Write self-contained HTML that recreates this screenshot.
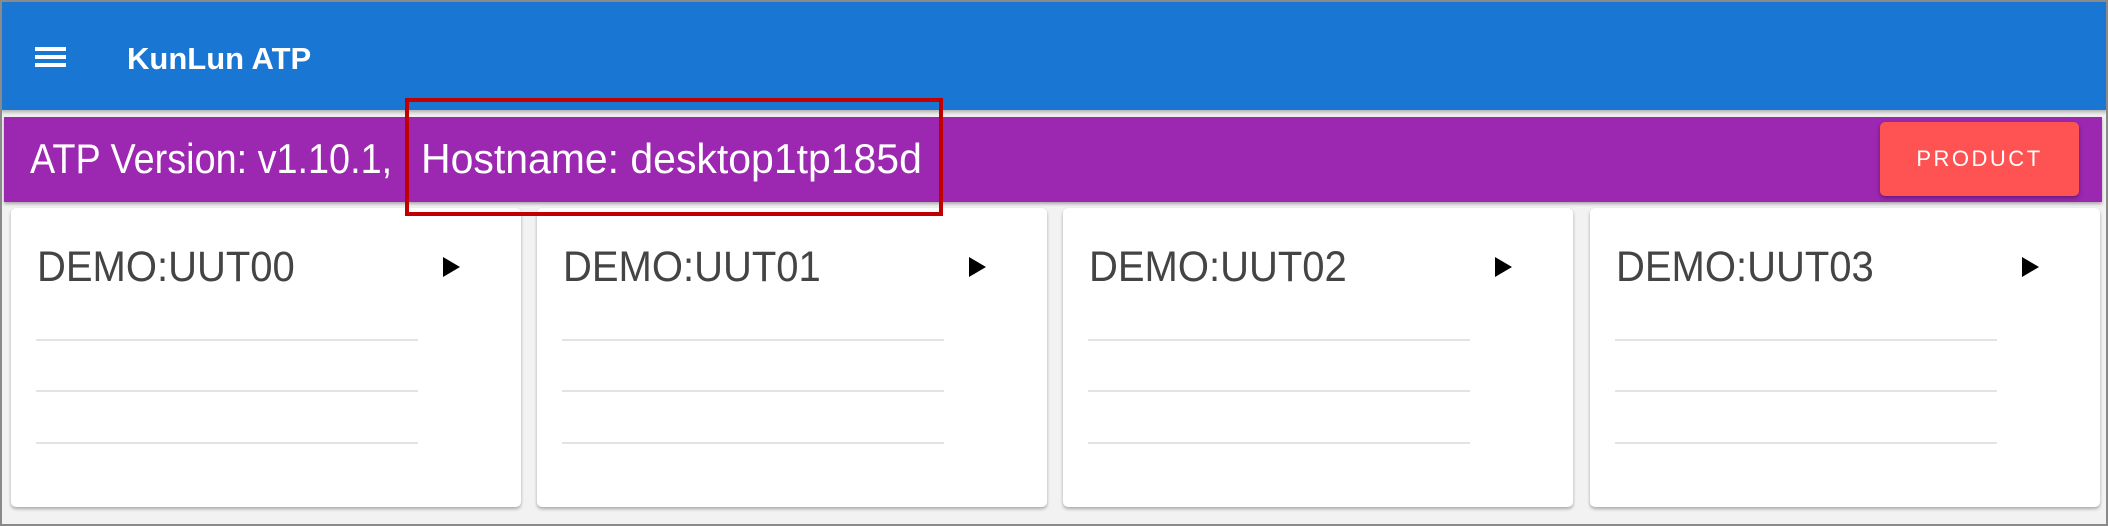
<!DOCTYPE html>
<html><head><style>
body{margin:0;width:2108px;height:526px;overflow:hidden;background:#f2f2f2;font-family:"Liberation Sans",sans-serif;position:relative}
.frame{position:absolute;left:0;top:0;width:2104px;height:522px;border:2px solid #8a8a8a;z-index:10;pointer-events:none}
.hdr{position:absolute;left:0;top:0;width:2108px;height:110px;background:#1976d2;box-shadow:0 2px 4px rgba(0,0,0,.3)}
.ham{position:absolute;left:35px;width:31px;height:4px;background:#fff}
.title{position:absolute;left:127px;top:41px;color:#fff;font-size:31px;font-weight:bold}
.bar{position:absolute;left:4px;top:117px;width:2098px;height:85px;background:#9c27b0;box-shadow:0 2px 3px rgba(0,0,0,.3)}
.ver{position:absolute;top:135px;color:#fff;font-size:42px;white-space:nowrap;transform-origin:0 0}
.btn{position:absolute;left:1880px;top:122px;width:199px;height:74px;background:#ff5252;border-radius:5px;color:#fff;font-size:22px;letter-spacing:2.5px;text-align:center;line-height:74px;box-shadow:0 2px 4px rgba(0,0,0,.35)}
.red{position:absolute;left:405px;top:98px;width:530px;height:110px;border:4px solid #c00000;z-index:5}
.card{position:absolute;top:208px;width:510px;height:299px;background:#fff;border-radius:5px;box-shadow:0 2px 3px rgba(0,0,0,.3)}
.ct{position:absolute;left:26px;top:35px;font-size:43px;color:#444;white-space:nowrap;transform-origin:0 0;transform:scaleX(0.93)}
.tri{position:absolute;left:432px;top:49px;width:0;height:0;border-top:10px solid transparent;border-bottom:10px solid transparent;border-left:17px solid #000}
.ln{position:absolute;left:25px;width:382px;height:2px;background:#e3e3e3}
</style></head><body>
<div class="hdr">
<div class="ham" style="top:47px"></div><div class="ham" style="top:55px"></div><div class="ham" style="top:63px"></div>
<div class="title">KunLun ATP</div>
</div>
<div class="bar"></div>
<div class="ver" style="left:30px;transform:scaleX(0.9)">ATP Version: v1.10.1,</div>
<div class="ver" style="left:421px;transform:scaleX(0.975)">Hostname: desktop1tp185d</div>
<div class="btn">PRODUCT</div>
<div class="red"></div>
<div class="card" style="left:11px"><div class="ct">DEMO:UUT00</div><div class="tri"></div><div class="ln" style="top:131px"></div><div class="ln" style="top:182px"></div><div class="ln" style="top:234px"></div></div>
<div class="card" style="left:537px"><div class="ct">DEMO:UUT01</div><div class="tri"></div><div class="ln" style="top:131px"></div><div class="ln" style="top:182px"></div><div class="ln" style="top:234px"></div></div>
<div class="card" style="left:1063px"><div class="ct">DEMO:UUT02</div><div class="tri"></div><div class="ln" style="top:131px"></div><div class="ln" style="top:182px"></div><div class="ln" style="top:234px"></div></div>
<div class="card" style="left:1590px"><div class="ct">DEMO:UUT03</div><div class="tri"></div><div class="ln" style="top:131px"></div><div class="ln" style="top:182px"></div><div class="ln" style="top:234px"></div></div>
<div class="frame"></div>
</body></html>
